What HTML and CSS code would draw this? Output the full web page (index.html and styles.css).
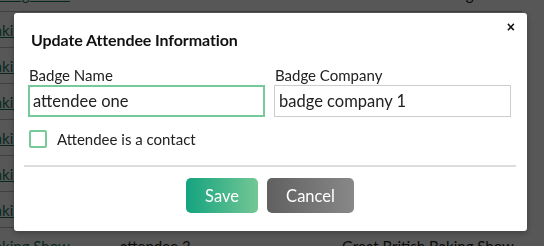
FILE: index.html
```html
<!DOCTYPE html>
<html lang="en">
<head>
    <meta charset="UTF-8">
    <title>Update Attendee Information</title>
    <link rel="stylesheet" href="styles.css">
</head>
<body>
    <table class="attendees">
        <tr><td><a href="#">Great British Baking Show</a></td><td>attendee 1</td><td>Great British Baking Show</td></tr>
        <tr><td><a href="#">Great British Baking Show</a></td><td>attendee 1</td><td>Great British Baking Show</td></tr>
        <tr><td><a href="#">Great British Baking Show</a></td><td>attendee 1</td><td>Great British Baking Show</td></tr>
        <tr><td><a href="#">Great British Baking Show</a></td><td>attendee 2</td><td>Great British Baking Show</td></tr>
        <tr><td><a href="#">Great British Baking Show</a></td><td>attendee 2</td><td>Great British Baking Show</td></tr>
        <tr><td><a href="#">Great British Baking Show</a></td><td>attendee 2</td><td>Great British Baking Show</td></tr>
        <tr><td><a href="#">Great British Baking Show</a></td><td>attendee 2</td><td>Great British Baking Show</td></tr>
        <tr><td><a href="#">Great British Baking Show</a></td><td>attendee 3</td><td>Great British Baking Show</td></tr>
    </table>

    <div class="overlay">
        <div class="modal">
            <button class="close" type="button">&times;</button>
            <h2 class="modal-title">Update Attendee Information</h2>
            <div class="fields">
                <label class="field">
                    <span>Badge Name</span>
                    <input class="focused" type="text" value="attendee one">
                </label>
                <label class="field">
                    <span>Badge Company</span>
                    <input type="text" value="badge company 1">
                </label>
            </div>
            <label class="check">
                <span class="box"></span>
                Attendee is a contact
            </label>
            <div class="actions">
                <button class="btn save" type="button">Save</button>
                <button class="btn cancel" type="button">Cancel</button>
            </div>
        </div>
    </div>
</body>
</html>
```

FILE: styles.css
```css
body {
    margin: 0;
    font-family: Lato, "Open Sans", sans-serif;
    background: #fff;
    color: #222;
    overflow: hidden;
}
.attendees {
    border-collapse: collapse;
    margin-top: -24px;
    margin-left: -110px;
    font-size: 15px;
}
.attendees td {
    height: 35px;
    padding: 0 8px;
    border-bottom: 1px solid #bbb;
    white-space: nowrap;
}
.attendees td:nth-child(1) { width: 206px; }
.attendees td:nth-child(2) { width: 206px; }
.attendees a { color: #1a7a5a; }

.overlay {
    position: fixed;
    inset: 0;
    background: rgba(0,0,0,0.66);
}
.modal {
    position: relative;
    margin: 13px 0 0 14px;
    width: 513px;
    height: 218px;
    box-sizing: border-box;
    background: #fff;
    border-radius: 3px;
    padding: 17px 16px 0 14px;
    box-shadow: 0 2px 6px rgba(0,0,0,0.3);
}
.close {
    position: absolute;
    top: 6px;
    right: 12px;
    border: none;
    background: none;
    font-size: 14px;
    font-weight: bold;
    color: #111;
    padding: 0;
    cursor: pointer;
}
.modal-title {
    margin: 0 0 17px 3px;
    font-size: 16px;
    font-weight: 700;
    color: #111;
    letter-spacing: -0.1px;
}
.fields {
    display: flex;
    gap: 9px;
}
.field {
    flex: 1;
    display: flex;
    flex-direction: column;
    gap: 1px;
    font-size: 15px;
    color: #222;
}
.field span { padding-left: 1px; }
.field input {
    height: 32px;
    box-sizing: border-box;
    border: 1px solid #ccc;
    padding: 0 4px;
    font-family: inherit;
    font-size: 16.5px;
    color: #222;
    outline: none;
}
.field input.focused {
    border: 2px solid #76c99a;
    padding: 0 3px;
}
.check {
    display: flex;
    align-items: center;
    gap: 10px;
    margin: 13px 0 0 1px;
    font-size: 15px;
    color: #222;
}
.box {
    width: 14px;
    height: 14px;
    border: 2px solid #76c99a;
    border-radius: 2px;
}
.actions {
    margin: 17px 0 0 -4px;
    padding-top: 11px;
    border-top: 2px solid #ddd;
    width: 492px;
    display: flex;
    justify-content: center;
    gap: 9px;
}
.btn {
    height: 35px;
    border: none;
    border-radius: 5px;
    color: #fff;
    font-family: inherit;
    font-size: 16.5px;
    padding: 0 18px;
    cursor: pointer;
}
.save {
    width: 72px;
    background: linear-gradient(90deg, #14a37f, #74c795);
}
.cancel {
    width: 87px;
    background: linear-gradient(90deg, #606060, #888);
}
```
